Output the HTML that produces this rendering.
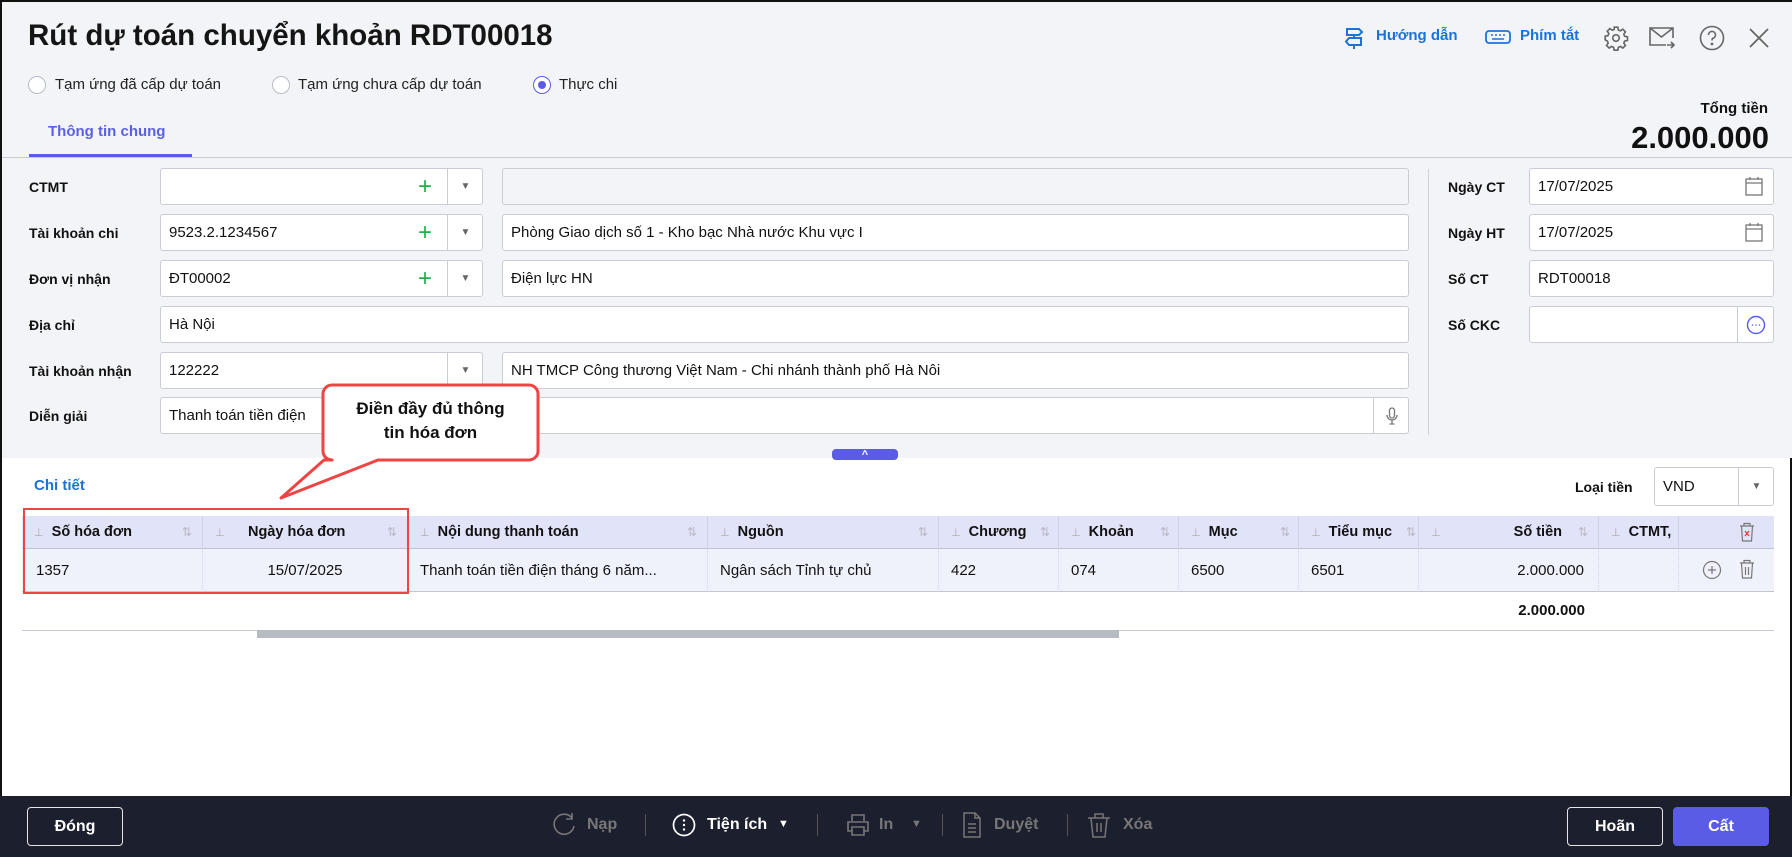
<!DOCTYPE html>
<html><head><meta charset="utf-8"><style>
*{box-sizing:border-box;margin:0;padding:0}
body{width:1792px;height:855px;position:relative;overflow:hidden;background:#fff;font-family:"Liberation Sans",Arial,sans-serif;color:#111;border:2px solid #111;border-bottom:none}
.a{position:absolute}
.hdr{left:0;top:0;width:1792px;height:456px;background:#f3f4f8}
.lbl{font-size:14px;font-weight:bold;color:#111}
.inp{position:absolute;height:37px;background:#fff;border:1px solid #c9ccd4;border-radius:3px;font-size:15px;line-height:36px;padding-left:8px;color:#111;white-space:nowrap;overflow:hidden}
.dis{background:#f3f4f8}
.plus{position:absolute;color:#22b14c;font-size:24px;line-height:35px;font-weight:normal}
.dd{position:absolute;top:0;height:35px;border-left:1px solid #c9ccd4;width:36px;text-align:center;color:#666;font-size:10px;line-height:35px}
.rad{position:absolute;width:18px;height:18px;border:1px solid #b9bcc6;border-radius:50%;background:#fff}
.rt{position:absolute;font-size:15px;color:#222}
.th{position:absolute;top:514px;height:33px;line-height:33px;font-size:14.5px;font-weight:bold;border-right:1px solid #cfd2e6}
.td{position:absolute;top:547px;height:43px;line-height:43px;font-size:15px;border-right:1px dotted #d3d6e2;white-space:nowrap}
.pin{color:#aaa;font-size:11px;font-weight:normal}
.srt{position:absolute;color:#b8bac4;font-size:12px;font-weight:normal}
.ft{position:absolute;top:814px;font-size:16px;font-weight:bold;color:#777}
.sep{position:absolute;top:812px;width:1px;height:22px;background:#555}
.btn{position:absolute;top:805px;height:39px;border:1px solid #e6e6e6;border-radius:4px;color:#fff;font-weight:bold;font-size:16px;line-height:37px;text-align:center}
</style></head><body>
<div class="a hdr"></div>
<div class="a" style="left:26px;top:17px;font-size:29.5px;font-weight:bold;color:#151515">Rút dự toán chuyển khoản RDT00018</div>

<!-- top right -->
<svg class="a" style="left:1341px;top:24px" width="22" height="24" viewBox="0 0 22 24" fill="none" stroke="#1a73d9" stroke-width="2"><path d="M4 3h12l3 3-3 3H4zM6 12h12v7H6l-3-3.5zM11 9v3M11 19v4"/></svg>
<div class="a" style="left:1374px;top:25px;font-size:15px;font-weight:bold;color:#1a73d9">Hướng dẫn</div>
<svg class="a" style="left:1483px;top:26px" width="26" height="20" viewBox="0 0 26 20" fill="none" stroke="#1a73d9" stroke-width="1.8"><rect x="1" y="3" width="24" height="12" rx="3"/><path d="M6 7h2M10 7h2M14 7h2M18 7h2M7 11h12" stroke-width="1.5"/></svg>
<div class="a" style="left:1518px;top:25px;font-size:15px;font-weight:bold;color:#1a73d9">Phím tắt</div>
<svg class="a" style="left:1601px;top:23px" width="26" height="26" viewBox="0 0 24 24" fill="none" stroke="#666" stroke-width="1.5"><circle cx="12" cy="12" r="3"/><path d="M10.3 2h3.4l.5 2.6 1.9.8 2.2-1.5 2.4 2.4-1.5 2.2.8 1.9 2.6.5v3.4l-2.6.5-.8 1.9 1.5 2.2-2.4 2.4-2.2-1.5-1.9.8-.5 2.6h-3.4l-.5-2.6-1.9-.8-2.2 1.5-2.4-2.4 1.5-2.2-.8-1.9L2 13.7v-3.4l2.6-.5.8-1.9-1.5-2.2 2.4-2.4 2.2 1.5 1.9-.8z"/></svg>
<svg class="a" style="left:1646px;top:23px" width="28" height="26" viewBox="0 0 28 26" fill="none" stroke="#666" stroke-width="1.6"><path d="M25 13V3H2v17h16M2 3l11.5 9L25 3M19 20h7M23 17l3 3-3 3"/></svg>
<svg class="a" style="left:1697px;top:23px" width="26" height="26" viewBox="0 0 26 26" fill="none" stroke="#666" stroke-width="1.6"><circle cx="13" cy="13" r="11.5"/><path d="M9.5 10a3.5 3.5 0 1 1 4.5 3.3c-1 .4-1 1-1 2.2"/><circle cx="13" cy="19" r=".6" fill="#666"/></svg>
<svg class="a" style="left:1746px;top:25px" width="22" height="22" viewBox="0 0 22 22" stroke="#666" stroke-width="1.8"><path d="M2 2l18 18M20 2L2 20"/></svg>

<!-- radios -->
<div class="rad" style="left:26px;top:74px"></div><div class="rt" style="left:53px;top:74px">Tạm ứng đã cấp dự toán</div>
<div class="rad" style="left:270px;top:74px"></div><div class="rt" style="left:296px;top:74px">Tạm ứng chưa cấp dự toán</div>
<div class="rad" style="left:531px;top:74px;border-color:#5b5ce6"><div style="position:absolute;left:4px;top:4px;width:8px;height:8px;border-radius:50%;background:#5b5ce6"></div></div><div class="rt" style="left:557px;top:74px">Thực chi</div>

<div class="a" style="left:46px;top:121px;font-size:15px;font-weight:bold;color:#5b5fe6">Thông tin chung</div>
<div class="a" style="left:27px;top:152px;width:163px;height:3px;background:#5b5ce6"></div>
<div class="a" style="left:0;top:155px;width:1792px;height:1px;background:#c8cad2"></div>
<div class="a" style="right:22px;top:98px;font-size:15px;font-weight:bold;color:#111">Tổng tiền</div>
<div class="a" style="right:21px;top:118px;font-size:31px;font-weight:bold;color:#111">2.000.000</div>

<!-- form -->
<div class="a lbl" style="left:27px;top:177px">CTMT</div>
<div class="inp" style="left:158px;top:166px;width:323px"><span class="plus" style="left:257px">+</span><div class="dd" style="left:286px">▼</div></div>
<div class="inp dis" style="left:500px;top:166px;width:907px"></div>

<div class="a lbl" style="left:27px;top:223px">Tài khoản chi</div>
<div class="inp" style="left:158px;top:212px;width:323px">9523.2.1234567<span class="plus" style="left:257px">+</span><div class="dd" style="left:286px">▼</div></div>
<div class="inp" style="left:500px;top:212px;width:907px">Phòng Giao dịch số 1 - Kho bạc Nhà nước Khu vực I</div>

<div class="a lbl" style="left:27px;top:269px">Đơn vị nhận</div>
<div class="inp" style="left:158px;top:258px;width:323px">ĐT00002<span class="plus" style="left:257px">+</span><div class="dd" style="left:286px">▼</div></div>
<div class="inp" style="left:500px;top:258px;width:907px">Điện lực HN</div>

<div class="a lbl" style="left:27px;top:315px">Địa chỉ</div>
<div class="inp" style="left:158px;top:304px;width:1249px">Hà Nội</div>

<div class="a lbl" style="left:27px;top:361px">Tài khoản nhận</div>
<div class="inp" style="left:158px;top:350px;width:323px">122222<div class="dd" style="left:286px">▼</div></div>
<div class="inp" style="left:500px;top:350px;width:907px">NH TMCP Công thương Việt Nam - Chi nhánh thành phố Hà Nôi</div>

<div class="a lbl" style="left:27px;top:406px">Diễn giải</div>
<div class="inp" style="left:158px;top:395px;width:1249px">Thanh toán tiền điện<div class="dd" style="left:1212px"><svg width="12" height="18" viewBox="0 0 12 18" fill="none" stroke="#777" stroke-width="1.3" style="margin-top:9px"><rect x="3.5" y="1" width="5" height="10" rx="2.5"/><path d="M1 8a5 5 0 0 0 10 0M6 13v4M3.5 17h5"/></svg></div></div>

<div class="a" style="left:1426px;top:167px;width:1px;height:266px;background:#d0d2d8"></div>
<div class="a lbl" style="left:1446px;top:177px">Ngày CT</div>
<div class="inp" style="left:1527px;top:166px;width:245px">17/07/2025</div>
<div class="a lbl" style="left:1446px;top:223px">Ngày HT</div>
<div class="inp" style="left:1527px;top:212px;width:245px">17/07/2025</div>
<svg class="a" style="left:1743px;top:174px" width="18" height="20" viewBox="0 0 18 20" fill="none" stroke="#777" stroke-width="1.3"><rect x="1" y="3" width="16" height="16"/><path d="M1 7h16M5 1v3M13 1v3"/></svg>
<svg class="a" style="left:1743px;top:220px" width="18" height="20" viewBox="0 0 18 20" fill="none" stroke="#777" stroke-width="1.3"><rect x="1" y="3" width="16" height="16"/><path d="M1 7h16M5 1v3M13 1v3"/></svg>
<div class="a lbl" style="left:1446px;top:269px">Số CT</div>
<div class="inp" style="left:1527px;top:258px;width:245px">RDT00018</div>
<div class="a lbl" style="left:1446px;top:315px">Số CKC</div>
<div class="inp" style="left:1527px;top:304px;width:245px"><div class="dd" style="left:207px"><svg width="20" height="20" viewBox="0 0 20 20" style="margin-top:8px" fill="none" stroke="#5b5ce6" stroke-width="1.4"><circle cx="10" cy="10" r="8.5"/><circle cx="6.5" cy="10" r=".8" fill="#5b5ce6" stroke="none"/><circle cx="10" cy="10" r=".8" fill="#5b5ce6" stroke="none"/><circle cx="13.5" cy="10" r=".8" fill="#5b5ce6" stroke="none"/></svg></div></div>

<div class="a" style="left:830px;top:447px;width:66px;height:11px;background:#5b5ce6;border-radius:4px;color:#fff;font-size:11px;line-height:13px;text-align:center;font-weight:bold">^</div>

<!-- detail -->
<div class="a" style="left:32px;top:475px;font-size:15px;font-weight:bold;color:#1a73d9">Chi tiết</div>
<div class="a lbl" style="left:1573px;top:477px">Loại tiền</div>
<div class="inp" style="left:1652px;top:465px;width:120px;height:39px;line-height:37px">VND<div class="dd" style="left:83px;height:37px;line-height:37px">▼</div></div>

<div class="a" style="left:20px;top:514px;width:1752px;height:33px;background:#e1e3f8;border-bottom:1px solid #bfc2cf"></div>
<div class="a" style="left:20px;top:547px;width:1752px;height:43px;background:#f0f2fb;border-bottom:1px solid #c4c6cf"></div>

<div class="th" style="left:20px;width:181px;padding-left:12px"><span class="pin">⊥</span>&nbsp; Số hóa đơn<span class="srt" style="right:10px">⇅</span></div>
<div class="th" style="left:201px;width:205px;padding-left:12px"><span class="pin">⊥</span><span style="position:absolute;left:45px">Ngày hóa đơn</span><span class="srt" style="right:10px">⇅</span></div>
<div class="th" style="left:406px;width:300px;padding-left:12px"><span class="pin">⊥</span>&nbsp; Nội dung thanh toán<span class="srt" style="right:10px">⇅</span></div>
<div class="th" style="left:706px;width:231px;padding-left:12px"><span class="pin">⊥</span>&nbsp; Nguồn<span class="srt" style="right:10px">⇅</span></div>
<div class="th" style="left:937px;width:120px;padding-left:12px"><span class="pin">⊥</span>&nbsp; Chương<span class="srt" style="right:8px">⇅</span></div>
<div class="th" style="left:1057px;width:120px;padding-left:12px"><span class="pin">⊥</span>&nbsp; Khoản<span class="srt" style="right:8px">⇅</span></div>
<div class="th" style="left:1177px;width:120px;padding-left:12px"><span class="pin">⊥</span>&nbsp; Mục<span class="srt" style="right:8px">⇅</span></div>
<div class="th" style="left:1297px;width:120px;padding-left:12px"><span class="pin">⊥</span>&nbsp; Tiểu mục<span class="srt" style="right:2px">⇅</span></div>
<div class="th" style="left:1417px;width:180px;padding-left:12px"><span class="pin">⊥</span><span style="position:absolute;right:36px">Số tiền</span><span class="srt" style="right:10px">⇅</span></div>
<div class="th" style="left:1597px;width:80px;padding-left:12px;overflow:hidden;white-space:nowrap"><span class="pin">⊥</span>&nbsp; CTMT,</div>
<svg class="a" style="left:1737px;top:520px" width="16" height="20" viewBox="0 0 16 20" fill="none" stroke="#777" stroke-width="1.2"><path d="M1 4h14M5 4V1.5h6V4M2.5 4l1 15h9l1-15"/><path d="M6 9l4 5M10 9l-4 5" stroke="#e53935"/></svg>

<div class="td" style="left:20px;width:181px;padding-left:14px">1357</div>
<div class="td" style="left:201px;width:205px;text-align:center">15/07/2025</div>
<div class="td" style="left:406px;width:300px;padding-left:12px">Thanh toán tiền điện tháng 6 năm...</div>
<div class="td" style="left:706px;width:231px;padding-left:12px">Ngân sách Tỉnh tự chủ</div>
<div class="td" style="left:937px;width:120px;padding-left:12px">422</div>
<div class="td" style="left:1057px;width:120px;padding-left:12px">074</div>
<div class="td" style="left:1177px;width:120px;padding-left:12px">6500</div>
<div class="td" style="left:1297px;width:120px;padding-left:12px">6501</div>
<div class="td" style="left:1417px;width:180px;text-align:right;padding-right:14px">2.000.000</div>
<div class="td" style="left:1597px;width:80px"></div>
<svg class="a" style="left:1700px;top:558px" width="20" height="20" viewBox="0 0 20 20" fill="none" stroke="#777" stroke-width="1.2"><circle cx="10" cy="10" r="8.5"/><path d="M10 6v8M6 10h8"/></svg>
<svg class="a" style="left:1737px;top:557px" width="16" height="20" viewBox="0 0 16 20" fill="none" stroke="#777" stroke-width="1.2"><path d="M1 4h14M5 4V1.5h6V4M2.5 4l1 15h9l1-15M6.5 8v8M9.5 8v8"/></svg>

<div class="a" style="left:1417px;top:600px;width:166px;text-align:right;font-size:15px;font-weight:bold">2.000.000</div>
<div class="a" style="left:20px;top:628px;width:1752px;height:1px;background:#c8cad2"></div>
<div class="a" style="left:255px;top:628px;width:862px;height:8px;background:#b7bbc2"></div>

<!-- red highlight & callout -->
<div class="a" style="left:21px;top:506px;width:386px;height:86px;border:2px solid #f04444"></div>
<svg class="a" style="left:270px;top:378px" width="280" height="125" viewBox="0 0 280 125"><path d="M60 5h197a9 9 0 0 1 9 9v57a9 9 0 0 1-9 9H106L9 118 52 80H60a9 9 0 0 1-9-9V14a9 9 0 0 1 9-9z" fill="#fff" stroke="#f04444" stroke-width="3" stroke-linejoin="round"/></svg>
<div class="a" style="left:321px;top:395px;width:215px;text-align:center;font-size:17px;font-weight:bold;line-height:24px;color:#111">Điền đầy đủ thông<br>tin hóa đơn</div>

<!-- footer -->
<div class="a" style="left:-2px;top:794px;width:1796px;height:61px;background:#1c1f2d"></div>
<div class="btn" style="left:25px;width:96px">Đóng</div>
<svg class="a" style="left:551px;top:810px" width="24" height="26" viewBox="0 0 24 26" fill="none" stroke="#777" stroke-width="1.6"><path d="M19 6a10 10 0 1 0 2 8M19 1v6h-6"/></svg>
<div class="ft" style="left:585px">Nạp</div>
<div class="sep" style="left:643px"></div>
<svg class="a" style="left:670px;top:811px" width="24" height="24" viewBox="0 0 24 24" fill="none" stroke="#fff" stroke-width="1.7"><circle cx="12" cy="12" r="10.5"/><circle cx="12" cy="7.5" r="1.2" fill="#fff" stroke="none"/><circle cx="12" cy="12" r="1.2" fill="#fff" stroke="none"/><circle cx="12" cy="16.5" r="1.2" fill="#fff" stroke="none"/></svg>
<div class="ft" style="left:705px;color:#fff">Tiện ích</div>
<div class="a" style="left:776px;top:816px;color:#fff;font-size:11px">▼</div>
<div class="sep" style="left:815px"></div>
<svg class="a" style="left:844px;top:811px" width="24" height="24" viewBox="0 0 24 24" fill="none" stroke="#777" stroke-width="1.6"><path d="M6 8V2h12v6M6 18H2V9h20v9h-4M6 14h12v8H6z"/></svg>
<div class="ft" style="left:877px">In</div>
<div class="a" style="left:909px;top:816px;color:#777;font-size:11px">▼</div>
<div class="sep" style="left:940px"></div>
<svg class="a" style="left:960px;top:810px" width="20" height="26" viewBox="0 0 20 26" fill="none" stroke="#777" stroke-width="1.5"><path d="M2 1h11l5 5v19H2zM13 1v5h5M6 12h8M6 16h8M6 20h8"/></svg>
<div class="ft" style="left:992px">Duyệt</div>
<div class="sep" style="left:1065px"></div>
<svg class="a" style="left:1085px;top:810px" width="24" height="26" viewBox="0 0 24 26" fill="none" stroke="#777" stroke-width="1.5"><path d="M1 6h22M8 6V2h8v4M4 6l2 19h12l2-19M10 11v9M14 11v9"/></svg>
<div class="ft" style="left:1121px">Xóa</div>
<div class="btn" style="left:1565px;width:96px">Hoãn</div>
<div class="btn" style="left:1671px;width:96px;background:#5b5ce6;border-color:#5b5ce6">Cất</div>
</body></html>
